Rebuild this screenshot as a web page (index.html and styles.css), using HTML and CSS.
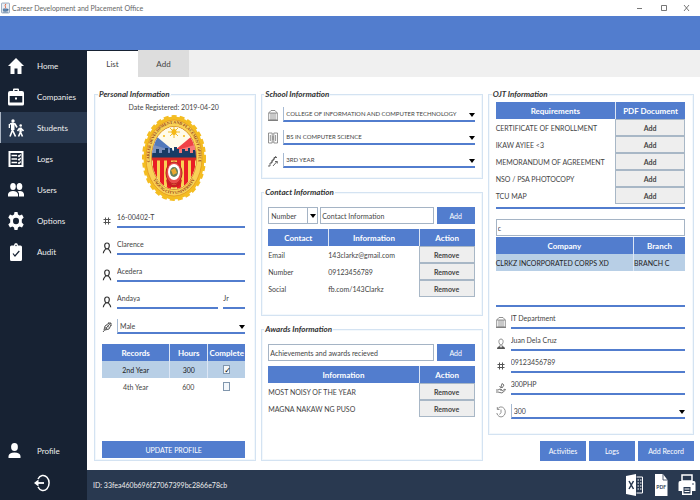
FILE: index.html
```html
<!DOCTYPE html>
<html lang="en">
<head>
<meta charset="utf-8">
<title>Career Development and Placement Office</title>
<link rel="stylesheet" href="styles.css">
</head>
<body>
<svg class="defs" aria-hidden="true">
  <symbol id="person" viewBox="0 0 10 12"><path d="M5 1C3.300 1 2.600 2.200 2.700 3.700C2.800 5.500 3.800 6.800 5 6.800S7.200 5.500 7.300 3.700C7.400 2.200 6.700 1 5 1ZM3.800 6.500C3.600 8 1.500 8 1.300 11.300M6.200 6.500C6.400 8 8.500 8 8.700 11.300" fill="none" stroke="#333" stroke-width="1.200"/></symbol>
  <symbol id="hash" viewBox="0 0 10 12"><path d="M3.500 2.500V9.500M6.500 2.500V9.500M1.500 4.500H8.500M1.500 7.500H8.500" stroke="#555" stroke-width="1" fill="none"/></symbol>
  <symbol id="building" viewBox="0 0 10 12"><path d="M.7 11V4L3 1.500H7L9.300 4V11ZM.7 4H9.300M3 4V11M5 4V11M7 4V11" stroke="#777" stroke-width=".8" fill="none"/><path d="M0 11.400H10" stroke="#777"/></symbol>
</svg>
<header class="titlebar">
  <svg class="java" viewBox="0 0 10 12"><rect x=".5" y=".5" width="9" height="11" rx="1" fill="#e8eef5" stroke="#8fa3ba"/><path d="M5.500 1.500C3 4 6.500 4.200 4.500 6.500" stroke="#e0562c" fill="none"/><path d="M2.500 7H7V9Q4.500 10 2.500 9ZM7 7.500H8V8.500H7M2 10.500H8" stroke="#39618d" fill="#6c91b8" stroke-width=".7"/></svg>
  <span class="app-name">Career Development and Placement Office</span>
  <svg class="window-controls" viewBox="0 0 56 10"><path d="M1 5.500H6M25.500 2.500H30.500V7.500H25.500ZM48 2L53 8M53 2L48 8" fill="none" stroke="#555" stroke-width=".8"/></svg>
</header>
<div class="banner"></div>
<div class="shell">
  <nav class="sidebar">
    <a href="#home"><svg viewBox="0 0 16 18"><path d="M8 1L0 9H2.500V17H6.500V11.500H9.500V17H13.500V9H16Z"/></svg>Home</a>
    <a href="#companies"><svg viewBox="0 0 16 18"><path fill-rule="evenodd" d="M5 3V1.500Q5 .5 6 .5H10Q11 .5 11 1.500V3H14Q16 3 16 5V16Q16 17.500 14.500 17.500H1.500Q0 17.500 0 16V5Q0 3 2 3ZM6.500 3H9.500V2H6.500ZM1.700 8H14.300V14.500H1.700Z"/><path d="M7 9.500H9V11.500H7Z"/></svg>Companies</a>
    <a href="#students" class="current"><svg viewBox="0 0 16 18"><circle cx="5" cy="2" r="1.700"/><circle cx="12.700" cy="6.500" r="1.300"/><path d="M2 5L4.500 4.300L7 5L9 8.500M4.500 5V11L7.500 17.500M4.500 11L2 17.500M12.500 9V13L14.500 17.500M12.500 13L10.500 17.500M11.500 9.300L9.500 12M13 9.500L15.500 12" fill="none" stroke="#fff" stroke-width="1.600"/><path d="M3 4.500H6.500V11H3ZM.7 5H2V9H.7ZM11.500 8.500H13.700V13H11.500Z"/></svg>Students</a>
    <a href="#logs"><svg viewBox="0 0 16 18"><path d="M1.500 2H14.500V16H1.500Z" fill="none" stroke="#fff" stroke-width="2"/><path d="M3.500 5.500H9M3.500 9H9M3.500 12.500H9M10 5.500L11 6.500L12.700 4.500M10 9L11 10L12.700 8M10 12.500L11 13.500L12.700 11.500" fill="none" stroke="#fff" stroke-width="1.300"/></svg>Logs</a>
    <a href="#users"><svg viewBox="0 0 16 18"><ellipse cx="5" cy="5.500" rx="2.800" ry="3.500"/><ellipse cx="11.500" cy="5.500" rx="2.800" ry="3.500"/><path d="M0 15.500V13Q1 10 5 10T10 13V15.500ZM11 15.500V12.500Q10.600 11 9.500 10.300Q15 9 16 13V15.500Z"/></svg>Users</a>
    <a href="#options"><svg viewBox="0 0 16 18"><path fill-rule="evenodd" d="M6.500 0H9.500L10 2.500L11.700 3.600L14 2.500L15.700 5.500L13.800 7.500V10.500L15.700 12.500L14 15.500L11.700 14.400L10 15.500L9.500 18H6.500L6 15.500L4.300 14.400L2 15.500L.3 12.500L2.200 10.500V7.500L.3 5.500L2 2.500L4.300 3.600L6 2.500ZM8 5.800A3 3.200 0 1 0 8 12.200A3 3.200 0 1 0 8 5.800Z"/></svg>Options</a>
    <a href="#audit"><svg viewBox="0 0 16 18"><path d="M3.500 2.500H6Q6 0 8 0T10 2.500H12.500Q14 2.500 14 4V16.500Q14 18 12.500 18H3.500Q2 18 2 16.500V4Q2 2.500 3.500 2.500Z"/><path d="M5 10.500L7 13L11.300 8" fill="none" stroke="#172233" stroke-width="1.200"/><circle cx="8" cy="2.500" r=".7" fill="#172233"/></svg>Audit</a>
    <a href="#profile" class="profile"><svg viewBox="0 0 16 18"><ellipse cx="6.500" cy="5" rx="3.400" ry="4"/><path d="M.5 16V14Q1 10.500 6.500 10.500T12.500 14V16Z"/></svg>Profile</a>
    <a href="#logout" class="logout" aria-label="Log out"><svg viewBox="0 0 16 18"><path d="M4 5A6 7.500 0 1 1 4 13" fill="none" stroke="#fff" stroke-width="1.500"/><path d="M2 9H10" stroke="#fff" stroke-width="1.800"/><path d="M0 9L4.500 5.500V12.500Z"/></svg></a>
  </nav>
  <div class="workspace">
    <div class="tabs" role="tablist">
      <button class="tab active" role="tab" aria-selected="true">List</button>
      <button class="tab" role="tab" aria-selected="false">Add</button>
    </div>
    <main class="content">
      <div class="column">
        <fieldset class="personal">
          <legend>Personal Information</legend>
          <p class="registered">Date Registered: 2019-04-20</p>
          <svg class="seal" viewBox="0 0 64 86" role="img" aria-label="Taguig City University seal">
            <defs><clipPath id="core"><ellipse cx="32" cy="43" rx="22" ry="31"/></clipPath>
            <path id="arc-top" d="M9.500 56A24.500 34 0 1 1 54.500 56"/><path id="arc-low" d="M7.500 55A26 36 0 0 0 56.500 55"/></defs>
            <ellipse cx="32" cy="43" rx="30.500" ry="41.500" fill="#f4bd22" stroke="#f4bd22" stroke-width="3" stroke-dasharray="5 3"/>
            <ellipse cx="32" cy="43" rx="29.500" ry="40.500" fill="#f4bd22"/>
            <ellipse cx="32" cy="43" rx="28" ry="38" fill="#f9d257" stroke="#dd8a1c" stroke-width=".6"/>
            <ellipse cx="32" cy="43" rx="22.500" ry="31.500" fill="#fff6d8" stroke="#c9781e" stroke-width=".8"/>
            <g clip-path="url(#core)">
              <path d="M8 8H56V80H8Z" fill="#fffbe9"/>
              <path d="M8 16L32 36V44H8Z" fill="#5279bb"/><path d="M56 16L32 36V44H56Z" fill="#ef4145"/>
              <path d="M8 29L32 36L8 44Z" fill="#7b91bd"/><path d="M56 29L32 36L56 44Z" fill="#f77977"/>
              <path d="M8 43V38H14V34H17V38H20V35H23V33H26V38H28V33H30V36H32V32H35V34H37V38H40V34H43V36H46V33H48V38H51V35H56V43Z" fill="#193c65"/>
              <path d="M8 43H56V80H8Z" fill="#f9d154"/><path d="M13 45V80M20 45V80M27 45V80M37 45V80M44 45V80M51 45V80" stroke="#e91d25" stroke-width="4"/>
              <path d="M8 44H56" stroke="#d92b25" stroke-width="3"/>
            </g>
            <path d="M32 11V23M26 17H38M28 13L36 21M36 13L28 21" stroke="#f1bc24" stroke-width="1"/><ellipse cx="32" cy="17" rx="2.500" ry="3" fill="#f5b815"/>
            <circle cx="22" cy="21" r="1" fill="#f5b815"/><circle cx="42" cy="21" r="1" fill="#f5b815"/>
            <ellipse cx="32" cy="58" rx="8" ry="11" fill="#e94c49" stroke="#b72020"/><ellipse cx="32" cy="57" rx="6" ry="8" fill="#fff"/>
            <ellipse cx="32" cy="57" rx="4" ry="5" fill="#657f5c"/><path d="M29 55L33 53L35 58L31 60Z" fill="#eba92d"/><path d="M24 64Q32 75 40 64L39 69Q32 76 25 69Z" fill="#ca1c24"/>
            <text class="seal-text"><textPath href="#arc-top" startOffset="50%">CAREER DEVELOPMENT AND PLACEMENT OFFICE</textPath></text>
            <text class="seal-text"><textPath href="#arc-low" startOffset="50%">TAGUIG CITY UNIVERSITY</textPath></text>
          </svg>
          <div class="field"><svg><use href="#hash"/></svg><input aria-label="Student number" value="16-00402-T"></div>
          <div class="field"><svg><use href="#person"/></svg><input aria-label="First name" value="Clarence"></div>
          <div class="field"><svg><use href="#person"/></svg><input aria-label="Middle name" value="Acedera"></div>
          <div class="field"><svg><use href="#person"/></svg><input aria-label="Last name" value="Andaya"><input class="suffix" aria-label="Suffix" value="Jr"></div>
          <div class="field"><svg viewBox="0 0 10 12"><path d="M1 11L8.500 2M6 2H9V5M2 9L3 5L7 2M3 9L7 8L9 4M3.500 6L5 8M5 4.500L7 6.500" fill="none" stroke="#444" stroke-width=".9"/></svg><span class="pick"><select aria-label="Gender"><option>Male</option></select></span></div>
          <table class="records centered">
            <colgroup><col><col class="hours"><col class="complete"></colgroup>
            <thead><tr><th>Records</th><th>Hours</th><th>Complete</th></tr></thead>
            <tbody><tr class="selected"><td>2nd Year</td><td>300</td><td><input type="checkbox" aria-label="2nd Year complete" checked></td></tr>
            <tr><td>4th Year</td><td>600</td><td><input type="checkbox" aria-label="4th Year complete"></td></tr></tbody>
          </table>
          <button class="primary update">UPDATE PROFILE</button>
        </fieldset>
      </div>
      <div class="column">
        <fieldset class="school">
          <legend>School Information</legend>
          <div class="field"><svg><use href="#building"/></svg><span class="pick"><select aria-label="College"><option>COLLEGE OF INFORMATION AND COMPUTER TECHNOLOGY</option></select></span></div>
          <div class="field"><svg viewBox="0 0 10 12"><path d="M.5 1H4.200V11H.5ZM5.800 1H9.500V11H5.800ZM4 5H6M4 7H6M2.300 3V9M7.600 3V9" fill="none" stroke="#777" stroke-width=".8"/></svg><span class="pick"><select aria-label="Course"><option>BS IN COMPUTER SCIENCE</option></select></span></div>
          <div class="field"><svg viewBox="0 0 10 12"><path d="M0 11H2V8H4V5H6V2.500H9M3 8L8 1M5 11L9 6.500M7 6.500H9.300V8.500" fill="none" stroke="#555" stroke-width=".9"/></svg><span class="pick"><select aria-label="Year level"><option>3RD YEAR</option></select></span></div>
        </fieldset>
        <fieldset class="contact">
          <legend>Contact Information</legend>
          <div class="entry"><span class="pick boxed"><select aria-label="Contact type"><option>Number</option></select></span><input aria-label="Contact information" value="Contact Information"><button class="primary">Add</button></div>
          <table>
            <colgroup><col class="kind"><col><col class="action"></colgroup>
            <thead><tr><th>Contact</th><th>Information</th><th>Action</th></tr></thead>
            <tbody><tr><td>Email</td><td>143clarkz@gmail.com</td><td><button>Remove</button></td></tr>
            <tr><td>Number</td><td>09123456789</td><td><button>Remove</button></td></tr>
            <tr><td>Social</td><td>fb.com/143Clarkz</td><td><button>Remove</button></td></tr></tbody>
          </table>
        </fieldset>
        <fieldset class="awards">
          <legend>Awards Information</legend>
          <div class="entry"><input aria-label="Award" value="Achievements and awards recieved"><button class="primary">Add</button></div>
          <table>
            <colgroup><col><col class="action"></colgroup>
            <thead><tr><th>Information</th><th>Action</th></tr></thead>
            <tbody><tr><td>MOST NOISY OF THE YEAR</td><td><button>Remove</button></td></tr>
            <tr><td>MAGNA NAKAW NG PUSO</td><td><button>Remove</button></td></tr></tbody>
          </table>
        </fieldset>
      </div>
      <div class="column">
        <fieldset class="ojt">
          <legend>OJT Information</legend>
          <div class="requirements"><table>
            <colgroup><col><col class="document"></colgroup>
            <thead><tr><th>Requirements</th><th>PDF Document</th></tr></thead>
            <tbody><tr><td>CERTIFICATE OF ENROLLMENT</td><td><button>Add</button></td></tr>
            <tr><td>IKAW AYIEE &lt;3</td><td><button>Add</button></td></tr>
            <tr><td>MEMORANDUM OF AGREEMENT</td><td><button>Add</button></td></tr>
            <tr><td>NSO / PSA PHOTOCOPY</td><td><button>Add</button></td></tr>
            <tr><td>TCU MAP</td><td><button>Add</button></td></tr></tbody>
          </table></div>
          <div class="entry"><input aria-label="Search company" value="c"></div>
          <div class="companies"><table>
            <colgroup><col><col class="branch"></colgroup>
            <thead><tr><th>Company</th><th>Branch</th></tr></thead>
            <tbody><tr class="selected"><td>CLRKZ INCORPORATED CORPS XD</td><td>BRANCH C</td></tr></tbody>
          </table></div>
          <div class="field"><svg><use href="#building"/></svg><input aria-label="Department" value="IT Department"></div>
          <div class="field"><svg viewBox="0 0 10 12"><path d="M5 1C3 1 2.700 3 3 4.500Q3.500 7 5 7T7 4.500C7.300 3 7 1 5 1ZM4 7V8M6 7V8" fill="none" stroke="#777" stroke-width=".8"/><path d="M1 11Q1 8.500 4 8L5 10L6 8Q9 8.500 9 11Z" fill="#555"/></svg><input aria-label="Supervisor" value="Juan Dela Cruz"></div>
          <div class="field"><svg><use href="#hash"/></svg><input aria-label="Supervisor number" value="09123456789"></div>
          <div class="field"><svg viewBox="0 0 10 12"><path d="M0 8H2L4 7L6 8H4M6 9L9 7L9.500 8L6 11L2 10H0M5 5L6 1.500L8 3L6 6ZM3.500 4L5 6" fill="none" stroke="#666" stroke-width=".9"/></svg><input aria-label="Allowance" value="300PHP"></div>
          <div class="field"><svg viewBox="0 0 10 12"><path d="M1.500 3A4.300 5 0 1 1 .8 7M1.300 1V3.500H3.500M5 3.500V6.500L3.500 8.500" fill="none" stroke="#777" stroke-width=".8"/></svg><span class="pick"><select aria-label="Required hours"><option>300</option></select></span></div>
        </fieldset>
        <div class="actions"><button class="primary">Activities</button><button class="primary">Logs</button><button class="primary wide">Add Record</button></div>
      </div>
    </main>
    <footer class="statusbar">
      <span>ID: 33fea460b696f27067399bc2866e78cb</span>
      <div class="exports">
        <button aria-label="Export to Excel"><svg viewBox="0 0 18 22"><path d="M0 2L10 0V22L0 20Z" fill="#fff"/><path d="M10.500 3H16.500V19H10.500" fill="none" stroke="#fff"/><path d="M11.500 6H13M14 6H15.500M11.500 9H13M14 9H15.500M11.500 12H13M14 12H15.500M11.500 15H13M14 15H15.500" stroke="#fff"/><path d="M3 7L7.500 15M7.500 7L3 15" stroke="#293950" stroke-width="1.500"/></svg></button>
        <button aria-label="Export to PDF"><svg viewBox="0 0 18 22"><path d="M3 0H11L15.500 6V22H3Z" fill="#fff"/><path d="M11 0V6H15.500" fill="none" stroke="#293950" stroke-width=".8"/><text x="9.200" y="15" class="pdf-text">PDF</text></svg></button>
        <button aria-label="Print"><svg viewBox="0 0 18 22"><path d="M4 1H14V7H4Z" fill="none" stroke="#fff" stroke-width="1.500"/><path fill-rule="evenodd" d="M2 7H16Q17.500 7 17.500 9V17H14V21H4V17H.5V9Q.5 7 2 7ZM5.500 13V19.500H12.500V13Z" fill="#fff"/><path d="M6.500 15H11.500M6.500 17.500H11.500" stroke="#fff"/><circle cx="15" cy="10" r=".8" fill="#293950"/></svg></button>
      </div>
    </footer>
  </div>
</div>
</body>
</html>
```
FILE: styles.css
```css
* { box-sizing: border-box; }
:root { --blue: #527dce; --navy: #172233; --slate: #293950; --line: #d4e3f2; }
body {
  margin: 0;
  min-height: 100vh;
  display: flex;
  flex-direction: column;
  background: #fff;
  color: #444;
  font: 7px/10px Lato, "Open Sans", sans-serif;
}
button, input, select { font: inherit; color: inherit; margin: 0; padding: 0; border: 0; border-radius: 0; background: none; }
button { text-align: center; }
.defs { display: none; }

.titlebar { height: 16px; display: flex; align-items: center; gap: 2px; padding: 0 8px 0 1px; color: #666; }
.java { width: 9px; height: 12px; }
.app-name { flex: 1; }
.window-controls { width: 56px; height: 10px; }
.banner { height: 34px; background: var(--blue); }
.shell { flex: 1; display: flex; }

.sidebar { width: 87px; flex: none; display: flex; flex-direction: column; background: var(--navy); }
.sidebar a { height: 31px; display: flex; align-items: center; gap: 13px; padding-left: 8px; color: #eee; font-size: 8px; text-decoration: none; }
.sidebar svg { width: 16px; height: 18px; fill: #fff; }
.sidebar .current { background: var(--slate); box-shadow: inset 1px 0 #aab4c2; }
.sidebar .profile { margin-top: auto; }
.sidebar .logout { height: 34px; padding: 0 0 0 34px; }

.workspace { flex: 1; min-width: 0; display: flex; flex-direction: column; }
.tabs { height: 27px; display: flex; background: #f0f0f0; }
.tab { width: 51px; background: #ddd; font-size: 8px; }
.tab.active { background: #fff; border-top: 1px solid var(--navy); }
.content { flex: 1; display: grid; grid-template-columns: 162fr 221fr 206fr; gap: 5px; padding: 12px 6px 9px 7px; }
.column { min-width: 0; display: flex; flex-direction: column; gap: 8px; }

fieldset { min-width: 0; margin: 0; padding: 0 7px 7px 6px; border: 1px solid var(--line); box-shadow: inset 0 0 0 1px #f3f8fc; }
legend { margin-left: -4px; padding: 0 1px; color: #333; font-size: 8px; font-weight: bold; font-style: italic; }
.personal { flex: 1; display: flex; flex-direction: column; padding: 0 10px 2px 7px; }
.registered { margin: 3px 0; text-align: center; }
.seal { width: 64px; height: 86px; margin: 0 auto; display: block; }
.seal-text { fill: #8e3415; font: bold 4px "Liberation Serif", serif; text-anchor: middle; }

.field { display: flex; align-items: flex-end; gap: 5px; }
.field > svg { width: 10px; height: 12px; flex: none; margin-bottom: 1px; }
.field > input { flex: 1; min-width: 0; height: 17px; padding-bottom: 3px; border-bottom: 2px solid var(--blue); }
.personal .field { padding-top: 10px; }
.field > .suffix { flex: none; width: 22px; }
.pick { position: relative; flex: 1; display: flex; min-width: 0; }
.pick select { width: 100%; height: 15px; padding: 0 8px 0 2px; border-bottom: 2px solid var(--blue); border-left: 1px solid #a6bad3; appearance: none; }
.pick::after { content: ""; position: absolute; right: 0; top: 50%; border: 3px solid transparent; border-top: 4px solid #000; border-bottom: 0; transform: translateY(-50%); pointer-events: none; }

table { width: 100%; table-layout: fixed; border-spacing: 0; }
th, td { height: 17px; padding: 0; text-align: left; white-space: nowrap; }
th { background: var(--blue); color: #fff; font-size: 8px; text-align: center; }
th + th, .selected td + td { border-left: 1px solid #dce6f5; }
.centered td { text-align: center; }
.selected { background: #b8cfe6; color: #222; }
td button { display: block; width: 100%; height: 17px; border: 1px solid #a8b7c6; background: #eee; font-weight: bold; }
.records { margin-top: 10px; }
.hours, .complete { width: 38px; }
.records input { appearance: none; display: block; width: 7px; height: 9px; margin: 0 auto; border: 1px solid #8096ad; background: #f3f7fb; line-height: 8px; text-align: center; }
.records input:checked::before { content: "✓"; color: #000; font: bold 8px/7px "DejaVu Sans", sans-serif; }
.primary { background: var(--blue); color: #fff; height: 17px; }
.update { margin-top: auto; }

.school { padding-bottom: 10px; }
.school .field { padding-top: 8px; }
.school select { font-size: 6px; }
.entry { display: flex; gap: 2px; margin: 10px 0 5px; }
.entry input { flex: 1; min-width: 0; height: 17px; padding: 0 1px; border: 1px solid #a5b4c5; }
.entry .primary { width: 38px; margin-left: 1px; }
.boxed { flex: none; width: 50px; }
.boxed select { height: 17px; border: 1px solid #a5b4c5; background: linear-gradient(#a5b4c5, #a5b4c5) right 9px top / 1px 100% no-repeat; }
.boxed::after { right: 2px; }
.kind { width: 60px; }
.action { width: 56px; }
.contact { padding-bottom: 18px; }
.awards { flex: 1; }

.ojt { flex: 1; padding: 0 8px 14px 7px; }
.requirements { margin-top: 3px; padding-bottom: 3px; border-bottom: 2px solid var(--blue); }
.document { width: 70px; }
.ojt .entry { margin: 10px 0 1px; }
.branch { width: 52px; }
.companies { height: 70px; border-bottom: 2px solid var(--blue); }
.ojt .field { padding-top: 5px; }
.ojt .field:last-child { padding-top: 9px; }
.actions { display: flex; justify-content: flex-end; gap: 3px; margin-top: -2px; }
.actions button { width: 46px; height: 20px; }
.actions .wide { width: 56px; }

.statusbar { height: 30px; display: flex; align-items: center; justify-content: space-between; padding: 0 4px 0 6px; background: var(--slate); color: #eee; }
.exports { display: flex; gap: 8px; }
.exports svg { display: block; width: 18px; height: 22px; }
.pdf-text { fill: var(--slate); font-size: 5px; font-weight: bold; text-anchor: middle; }
```
